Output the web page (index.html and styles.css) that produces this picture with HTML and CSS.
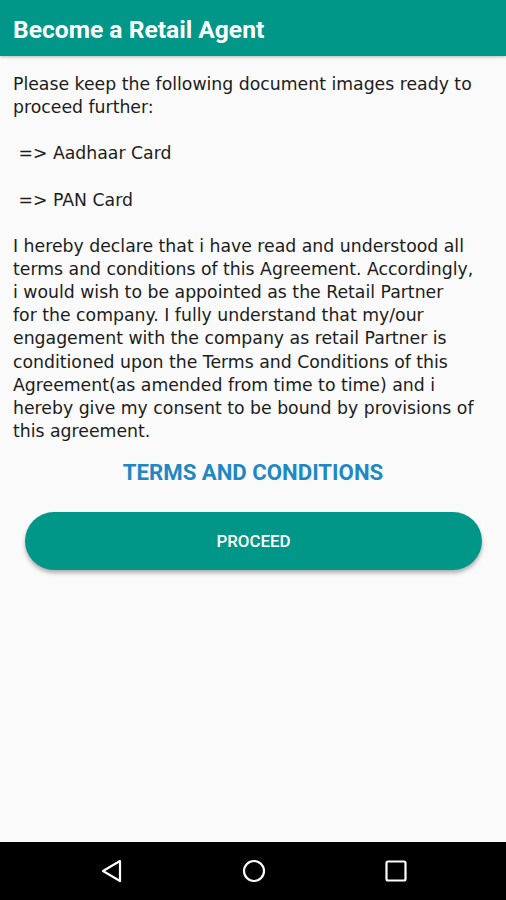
FILE: index.html
```html
<!DOCTYPE html>
<html>
<head>
<meta charset="utf-8">
<link rel="stylesheet" href="styles.css">
</head>
<body>
<div class="screen">
  <header class="appbar">Become a Retail Agent</header>
  <main class="content">
    <p class="txt">Please keep the following document images ready to<br>proceed further:</p>
    <p class="txt">&nbsp;=&gt; Aadhaar Card</p>
    <p class="txt">&nbsp;=&gt; PAN Card</p>
    <p class="txt last">I hereby declare that i have read and understood all<br>terms and conditions of this Agreement. Accordingly,<br>i would wish to be appointed as the Retail Partner<br>for the company. I fully understand that my/our<br>engagement with the company as retail Partner is<br>conditioned upon the Terms and Conditions of this<br>Agreement(as amended from time to time) and i<br>hereby give my consent to be bound by provisions of<br>this agreement.</p>
    <div class="terms">TERMS AND CONDITIONS</div>
    <div class="btnwrap"><button class="proceed">PROCEED</button></div>
  </main>
  <nav class="navbar">
    <svg class="navicon" width="26" height="26" viewBox="0 0 26 26"><path d="M21 3 L4 13 L21 23 Z" fill="none" stroke="#fff" stroke-width="2.2" stroke-linejoin="round"/></svg>
    <svg class="navicon" width="26" height="26" viewBox="0 0 26 26"><circle cx="13" cy="13" r="10" fill="none" stroke="#fff" stroke-width="2.2"/></svg>
    <svg class="navicon" width="26" height="26" viewBox="0 0 26 26"><rect x="3.5" y="3.5" width="19" height="19" rx="1.5" fill="none" stroke="#fff" stroke-width="2.2"/></svg>
  </nav>
</div>
</body>
</html>
```
FILE: styles.css
```css
html, body {
  margin: 0;
  padding: 0;
  background: #fafafa;
}
.screen {
  width: 506px;
  height: 900px;
  display: flex;
  flex-direction: column;
  background: #fafafa;
}
.appbar {
  height: 56px;
  flex: none;
  background: #009688;
  color: #fff;
  font-family: Roboto, "Liberation Sans", sans-serif;
  font-weight: 700;
  font-size: 24.6px;
  display: flex;
  align-items: center;
  padding: 0 13px;
  padding-top: 3px;
  box-sizing: border-box;
  box-shadow: 0 1px 3px rgba(0,0,0,0.25);
}
.content {
  flex: 1;
  padding: 17px 0 0 13px;
}
.txt {
  margin: 0 0 23.13px 0;
  font-family: "DejaVu Sans", sans-serif;
  font-size: 17.3px;
  line-height: 23.13px;
  color: #1c1c1c;
  white-space: nowrap;
}
.txt.last {
  margin-bottom: 0;
}
.terms {
  text-align: center;
  font-family: Roboto, "Liberation Sans", sans-serif;
  font-weight: 700;
  font-size: 22.2px;
  color: #1e88c5;
  margin-top: 16px;
  margin-left: -13px;
  line-height: 26px;
}
.btnwrap {
  padding: 27px 24px 0 12px;
}
.proceed {
  display: block;
  width: 100%;
  height: 58px;
  border: none;
  border-radius: 29px;
  background: #009688;
  color: #fff;
  font-family: Roboto, "Liberation Sans", sans-serif;
  font-weight: 500;
  font-size: 16.9px;
  box-shadow: 0 3px 4px rgba(0,0,0,0.3);
}
.navbar {
  height: 58px;
  flex: none;
  background: #000;
  display: flex;
  align-items: center;
  justify-content: space-between;
  padding: 0 97px 0 99px;
}
.navicon {
  display: block;
}
```
